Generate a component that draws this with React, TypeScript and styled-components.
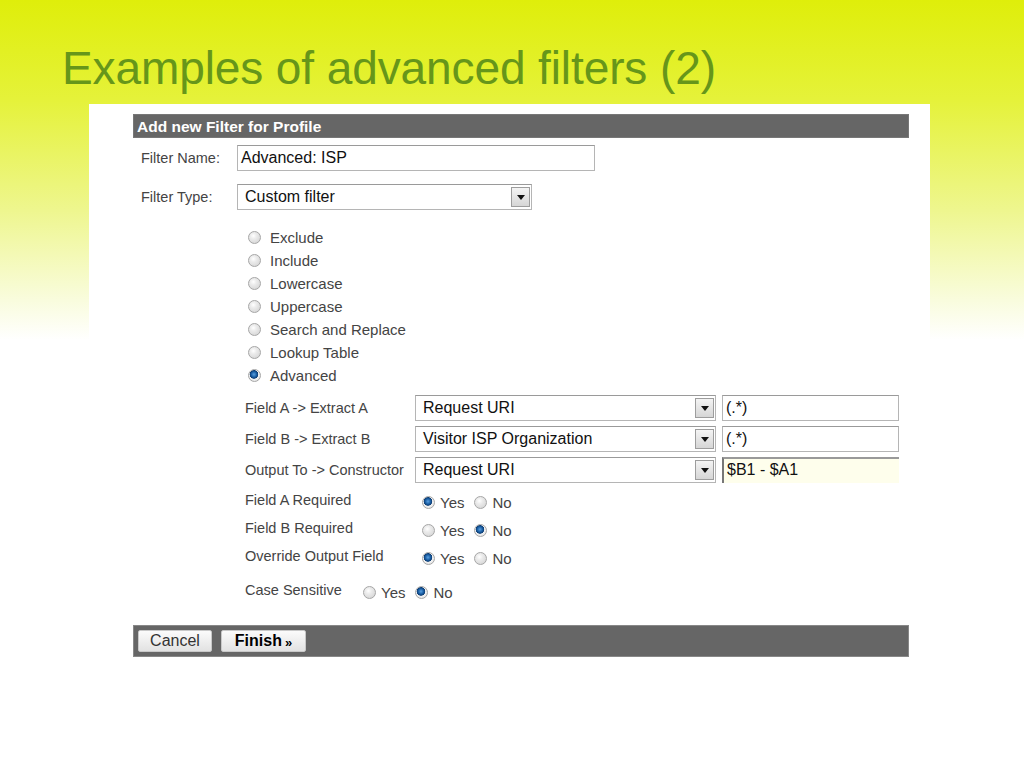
import React from 'react';
import styled, { createGlobalStyle } from 'styled-components';

const GlobalStyle = createGlobalStyle`
  html, body {
    margin: 0;
    padding: 0;
  }
  body {
    width: 1024px;
    height: 768px;
    overflow: hidden;
    background: linear-gradient(to bottom, #dfee0a 0px, #e5f23a 100px, #eef68e 210px, #f9fcdd 300px, #ffffff 340px);
    font-family: "Liberation Sans", Arial, sans-serif;
  }
`;

const Slide = styled.div`
  display: flex;
  flex-direction: column;
`;

const SlideTitle = styled.h1`
  margin: 0;
  padding: 41px 0 0 62px;
  height: 55px;
  line-height: 54px;
  font-size: 46px;
  font-weight: normal;
  color: #66961a;
  letter-spacing: -0.1px;
`;

const Panel = styled.div`
  margin: 8px 0 0 89px;
  width: 841px;
  box-sizing: border-box;
  padding: 10px 21px 0 44px;
  background: #fff;
  min-height: 664px;
`;

const HeaderBar = styled.div`
  height: 24px;
  line-height: 24px;
  background: #666;
  color: #fff;
  font-weight: bold;
  font-size: 15.5px;
  padding-left: 3px;
  border: 1px solid #777;
  box-sizing: border-box;
`;

const TopRow = styled.div<{ $mt: number }>`
  display: flex;
  align-items: center;
  margin-top: ${p => p.$mt}px;
  padding-left: 8px;
`;

const TopLabel = styled.label`
  width: 96px;
  font-size: 14.5px;
  color: #444;
`;

const TextInput = styled.div<{ $w: number; $focus?: boolean }>`
  width: ${p => p.$w}px;
  height: 26px;
  box-sizing: border-box;
  border: 1px solid #b5b5b5;
  border-top-color: #9a9a9a;
  background: #fff;
  font-size: 16px;
  color: #111;
  line-height: 24px;
  padding-left: 3px;
  white-space: nowrap;
  ${p => p.$focus && `
    background: #fefeec;
    border: none;
    border-left: 2px solid #777;
    border-top: 2px solid #999;
    line-height: 22px;
  `}
`;

const SelectBox = styled.div<{ $w: number }>`
  width: ${p => p.$w}px;
  height: 26px;
  box-sizing: border-box;
  border: 1px solid #b5b5b5;
  border-top-color: #9a9a9a;
  background: #fff;
  display: flex;
  align-items: center;
  justify-content: space-between;
  padding: 0 1px 0 7px;
  font-size: 16px;
  color: #111;
  white-space: nowrap;
`;

const DropButton = styled.div`
  width: 19px;
  height: 20px;
  box-sizing: border-box;
  border: 1px solid #9d9d9d;
  background: linear-gradient(#f4f4f4, #d6d6d6);
  display: flex;
  align-items: center;
  justify-content: center;
`;

const Arrow = styled.div`
  width: 0;
  height: 0;
  border-left: 4px solid transparent;
  border-right: 4px solid transparent;
  border-top: 5px solid #111;
  margin-top: 1px;
`;

const TypeList = styled.div`
  margin: 16px 0 0 115px;
  display: flex;
  flex-direction: column;
`;

const TypeItem = styled.div`
  height: 23px;
  display: flex;
  align-items: center;
  gap: 9px;
  font-size: 15px;
  color: #444;
`;

const Radio = styled.span<{ $checked?: boolean }>`
  width: 13px;
  height: 13px;
  box-sizing: border-box;
  border-radius: 50%;
  border: 1px solid #a6a6a6;
  background: ${p =>
    p.$checked
      ? 'radial-gradient(circle at 45% 40%, #5aa0e0 0px, #1d62a8 2.5px, #0d3d74 4px, #f2f2f2 4.6px, #dcdcdc 100%)'
      : 'radial-gradient(circle at 40% 35%, #ffffff 0px, #ececec 3px, #cfcfcf 100%)'};
  flex-shrink: 0;
  display: inline-block;
`;

const FieldGrid = styled.div`
  margin: 8px 0 0 112px;
  display: grid;
  grid-template-columns: 164px 301px 177px;
  column-gap: 6px;
  row-gap: 5px;
  align-items: center;
`;

const FieldLabel = styled.span`
  font-size: 14.5px;
  color: #444;
  white-space: nowrap;
`;

const OptionRows = styled.div`
  margin: 3px 0 0 112px;
  display: flex;
  flex-direction: column;
`;

const OptionRow = styled.div<{ $h: number; $labelW: number }>`
  height: ${p => p.$h}px;
  display: grid;
  grid-template-columns: ${p => p.$labelW}px auto;
  align-items: center;
`;

const Choices = styled.div`
  display: flex;
  align-items: center;
  padding-top: 4px;
`;

const Choice = styled.span`
  display: inline-flex;
  align-items: center;
  gap: 5px;
  font-size: 15px;
  color: #444;
  margin-right: 10px;
`;

const FooterBar = styled.div`
  margin-top: 15px;
  height: 32px;
  box-sizing: border-box;
  background: #666;
  border: 1px solid #888;
  display: flex;
  align-items: center;
  gap: 9px;
  padding-left: 4px;
`;

const Button = styled.button<{ $primary?: boolean }>`
  height: 22px;
  width: ${p => (p.$primary ? 85 : 74)}px;
  border: 1px solid #c8c8c8;
  border-radius: 2px;
  background: linear-gradient(#fbfbfb, #e2e2e2);
  font-family: "Liberation Sans", Arial, sans-serif;
  font-size: 16px;
  font-weight: ${p => (p.$primary ? 'bold' : 'normal')};
  color: ${p => (p.$primary ? '#000' : '#333')};
  padding: 0;
  display: flex;
  align-items: center;
  justify-content: center;
  gap: 3px;
`;

const Chevron = styled.span`
  font-size: 13px;
  font-weight: bold;
  margin-top: 2px;
`;

const filterTypes = ['Exclude', 'Include', 'Lowercase', 'Uppercase', 'Search and Replace', 'Lookup Table', 'Advanced'];

const fields = [
  { label: 'Field A -> Extract A', select: 'Request URI', value: '(.*)' },
  { label: 'Field B -> Extract B', select: 'Visitor ISP Organization', value: '(.*)' },
  { label: 'Output To -> Constructor', select: 'Request URI', value: '$B1 - $A1', focus: true },
];

const options = [
  { label: 'Field A Required', yes: true },
  { label: 'Field B Required', yes: false },
  { label: 'Override Output Field', yes: true },
];

function Dropdown({ width, text }: { width: number; text: string }) {
  return (
    <SelectBox $w={width}>
      <span>{text}</span>
      <DropButton><Arrow /></DropButton>
    </SelectBox>
  );
}

function YesNo({ yes }: { yes: boolean }) {
  return (
    <Choices>
      <Choice><Radio $checked={yes} />Yes</Choice>
      <Choice><Radio $checked={!yes} />No</Choice>
    </Choices>
  );
}

export default function App() {
  return (
    <Slide>
      <GlobalStyle />
      <SlideTitle>Examples of advanced filters (2)</SlideTitle>
      <Panel>
        <HeaderBar>Add new Filter for Profile</HeaderBar>
        <TopRow $mt={7}>
          <TopLabel>Filter Name:</TopLabel>
          <TextInput $w={358}>Advanced: ISP</TextInput>
        </TopRow>
        <TopRow $mt={13}>
          <TopLabel>Filter Type:</TopLabel>
          <Dropdown width={295} text="Custom filter" />
        </TopRow>
        <TypeList>
          {filterTypes.map(t => (
            <TypeItem key={t}>
              <Radio $checked={t === 'Advanced'} />
              {t}
            </TypeItem>
          ))}
        </TypeList>
        <FieldGrid>
          {fields.map(f => (
            <React.Fragment key={f.label}>
              <FieldLabel>{f.label}</FieldLabel>
              <Dropdown width={301} text={f.select} />
              <TextInput $w={177} $focus={f.focus}>{f.value}</TextInput>
            </React.Fragment>
          ))}
        </FieldGrid>
        <OptionRows>
          {options.map(o => (
            <OptionRow key={o.label} $h={28} $labelW={177}>
              <FieldLabel>{o.label}</FieldLabel>
              <YesNo yes={o.yes} />
            </OptionRow>
          ))}
          <OptionRow $h={40} $labelW={118}>
            <FieldLabel>Case Sensitive</FieldLabel>
            <YesNo yes={false} />
          </OptionRow>
        </OptionRows>
        <FooterBar>
          <Button>Cancel</Button>
          <Button $primary>
            Finish<Chevron>»</Chevron>
          </Button>
        </FooterBar>
      </Panel>
    </Slide>
  );
}
